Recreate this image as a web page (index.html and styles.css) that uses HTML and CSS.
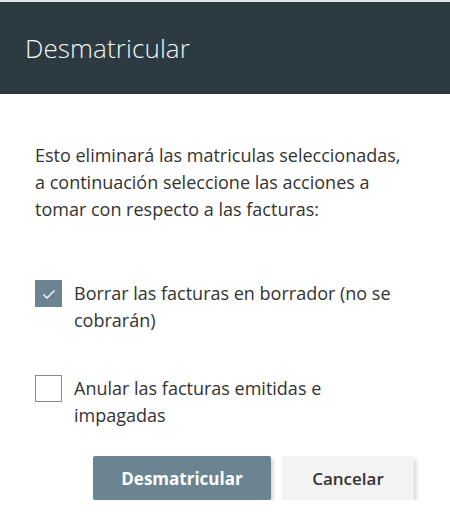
FILE: index.html
```html
<!DOCTYPE html>
<html>
<head>
<meta charset="utf-8" />
<title>Desmatricular</title>
<link rel="stylesheet" href="styles.css">
</head>
<body>

<div class="dialog">
  <div class="header">
    <h1>Desmatricular</h1>
  </div>

  <div class="content">
    <p class="message">Esto eliminará las matriculas seleccionadas, a continuación seleccione las acciones a tomar con respecto a las facturas:</p>

    <div class="options">
      <label class="option">
        <span class="box checked">
          <svg width="16" height="16" viewBox="0 0 16 16"><path d="M2.5 8.5 L6 12 L13.5 4.5" fill="none" stroke="#ffffff" stroke-width="1.4"/></svg>
        </span>
        <span class="label">Borrar las facturas en borrador (no se cobrarán)</span>
      </label>

      <label class="option">
        <span class="box"></span>
        <span class="label">Anular las facturas emitidas e impagadas</span>
      </label>
    </div>

    <div class="buttons">
      <button type="button" class="btn primary">Desmatricular</button>
      <button type="button" class="btn">Cancelar</button>
    </div>
  </div>
</div>

</body>
</html>
```

FILE: styles.css
```css
body
{
    margin: 0;
    background-color: #ffffff;
    font-family: "Open Sans", "Noto Sans", sans-serif;
}

.dialog
{
    width: 450px;
}

.header
{
    border-top: 2px solid #e3e6e8;
    height: 92px;
    background-color: #2c3a42;
    display: flex;
    align-items: center;
    padding-left: 25px;
}

.header h1
{
    margin: 0;
    color: #f4f6f7;
    font-weight: 300;
    font-size: 26px;
    letter-spacing: 0.1px;
}

.content
{
    padding: 48px 43px 0 35px;
}

.message
{
    margin: 0 0 57px 0;
    font-size: 18px;
    line-height: 27px;
    color: #333333;
}

.options
{
    display: flex;
    flex-direction: column;
    gap: 41px;
    margin-bottom: 27px;
}

.option
{
    display: flex;
    align-items: flex-start;
}

.box
{
    flex: none;
    width: 25px;
    height: 25px;
    border: 1px solid #8a8a8a;
    background-color: #ffffff;
    margin-right: 12px;
    display: flex;
    align-items: center;
    justify-content: center;
}

.box.checked
{
    background-color: #6a8491;
    border-color: #6a8491;
}

.label
{
    font-size: 18px;
    line-height: 27px;
    color: #333333;
}

.buttons
{
    display: flex;
    gap: 11px;
    padding-left: 58px;
}

.btn
{
    flex: none;
    height: 44px;
    border: none;
    border-radius: 2px;
    font-family: "Open Sans", "Noto Sans", sans-serif;
    font-size: 17px;
    font-weight: 600;
    color: #333333;
    background-color: #f3f3f3;
    box-shadow: 2px 3px 4px rgba(0, 0, 0, 0.18);
    width: 132px;
}

.btn.primary
{
    width: 178px;
    background-color: #6a8491;
    color: #ffffff;
    font-weight: 700;
}
```
